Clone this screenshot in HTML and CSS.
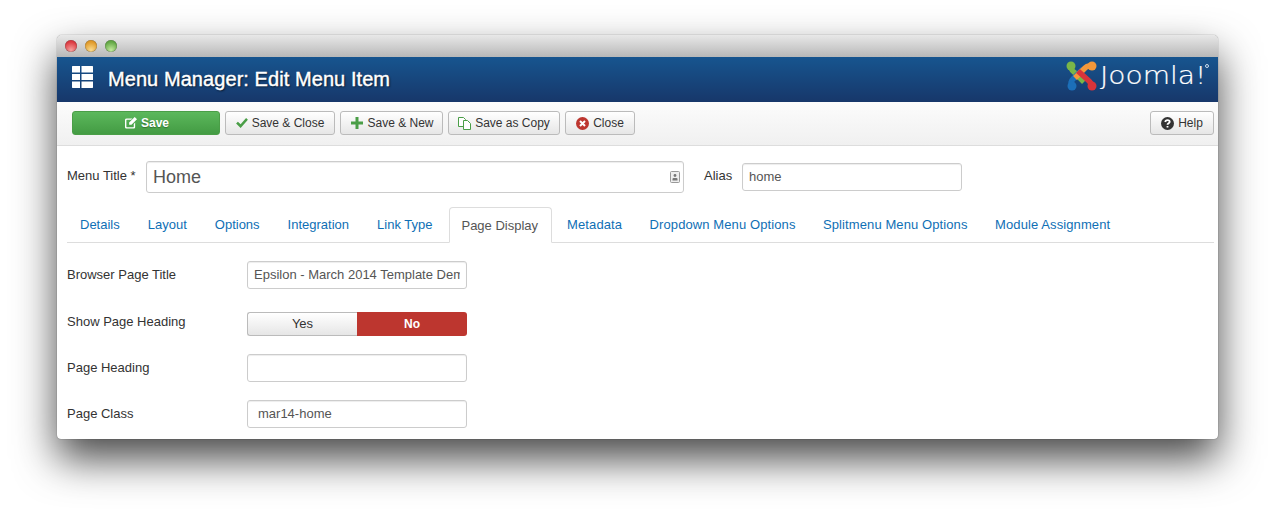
FILE: index.html
```html
<!DOCTYPE html>
<html lang="en">
<head>
    <title>Menu Manager: Edit Menu Item</title>
    <link rel="stylesheet" href="styles.css">
</head>
<body>
<div class="window">
    <div class="titlebar">
        <span class="light light-red"></span>
        <span class="light light-yellow"></span>
        <span class="light light-green"></span>
    </div>
    <header class="header">
        <svg class="header-icon" width="21" height="22" viewBox="0 0 21 22">
            <path fill="#fff" d="M.5 0H8v6.500H0V.5zM9.500 0h11l.5.500v6H9.500zM0 8h8v6H0zM9.500 8H21v6H9.500zM0 15.500h8V22H.5l-.5-.5zM9.500 15.500H21v6l-.5.500h-11z"/>
        </svg>
        <h1 class="header-title">Menu Manager: Edit Menu Item</h1>
        <div class="logo">
            <svg width="31" height="31" viewBox="0 0 31 31" fill="none" stroke-width="5.500">
                <path stroke="#7ab648" d="M5 8q1 3 4 5l9 9"/>
                <circle cx="5" cy="6" r="4.500" fill="#7ab648"/>
                <path stroke="#1c6fb8" d="M17 9 7 19q-3 3-1 6"/>
                <circle cx="6" cy="26" r="4.500" fill="#1c6fb8"/>
                <path stroke="#f4983a" d="M25 7q-3-2-6 1L9 18"/>
                <circle cx="26" cy="6" r="4.500" fill="#f4983a"/>
                <path stroke="#d9343a" d="M12 11l11 10q3 3 2 5"/>
                <circle cx="26" cy="26" r="4.500" fill="#d9343a"/>
            </svg>
            <span class="logo-text">Joomla!</span>
            <span class="logo-reg"></span>
        </div>
    </header>
    <div class="toolbar">
        <button class="btn btn-save">
            <svg width="12" height="12" viewBox="0 0 13 13"><path fill="#fff" d="M2 1.500h6L6.500 3H2q-.5 0-.5.500v7q0 .5.500.5h7q.5 0 .5-.5V7.500L11 6v5q0 1.500-1.500 1.500h-8Q0 12.500 0 11V3q0-1.500 2-1.500zM10.500 0 13 2.500 7 8.500H4.500V6z"/></svg>
            Save
        </button>
        <button class="btn btn-save-close">
            <svg width="12" height="10" viewBox="0 0 13 11"><path fill="#4a9e47" d="M0 6l2-2 3 3 6-7 2 2-8 9z"/></svg>
            Save &amp; Close
        </button>
        <button class="btn btn-save-new">
            <svg width="12" height="12" viewBox="0 0 12 12"><path fill="#4a9e47" d="M4.500 0h3v4.500H12v3H7.500V12h-3V7.500H0v-3h4.500z"/></svg>
            Save &amp; New
        </button>
        <button class="btn btn-copy">
            <svg width="13" height="13" viewBox="0 0 13 13" fill="#fff" stroke="#4a9e47"><path d="M.5.500h5l2 2v7h-7z"/><path d="M5.500 3.500h4l3 3v6h-7z"/></svg>
            Save as Copy
        </button>
        <button class="btn btn-close">
            <svg width="13" height="13" viewBox="0 0 13 13"><circle cx="6.500" cy="6.500" r="6.500" fill="#bd362f"/><path stroke="#fff" stroke-width="2" d="M4 4l5 5M9 4l-5 5"/></svg>
            Close
        </button>
        <button class="btn btn-help">
            <svg width="13" height="13" viewBox="0 0 13 13"><circle cx="6.500" cy="6.500" r="6.500" fill="#333"/><path fill="none" stroke="#fff" stroke-width="1.800" d="M4.200 5q.3-1.900 2.300-1.900 2.200 0 2.200 1.700c0 1.500-2.200 1.400-2.200 3"/><path stroke="#fff" stroke-width="1.800" d="M6.500 9v1.600"/></svg>
            Help
        </button>
    </div>
    <div class="content">
        <div class="title-row">
            <label class="title-label">Menu Title *</label>
            <div class="title-field">
                <input class="input input-title" type="text" value="Home">
                <svg class="card-icon" width="10" height="12" viewBox="0 0 10 12">
                    <rect x=".5" y=".5" width="9" height="11" rx="1" fill="#eee" stroke="#999"/>
                    <circle cx="5" cy="4.500" r="1.400" fill="#777"/>
                    <path fill="#777" d="M2.500 9.500V8q0-1 1-1h3q1 0 1 1v1.500z"/>
                </svg>
            </div>
            <label class="alias-label">Alias</label>
            <input class="input input-alias" type="text" value="home">
        </div>
        <ul class="tabs">
            <li class="tab">Details</li>
            <li class="tab">Layout</li>
            <li class="tab">Options</li>
            <li class="tab">Integration</li>
            <li class="tab">Link Type</li>
            <li class="tab tab-active">Page Display</li>
            <li class="tab tab-long">Metadata</li>
            <li class="tab tab-long">Dropdown Menu Options</li>
            <li class="tab tab-long">Splitmenu Menu Options</li>
            <li class="tab tab-long">Module Assignment</li>
        </ul>
        <div class="form">
            <div class="form-row">
                <label class="form-label">Browser Page Title</label>
                <input class="input input-field" type="text" value="Epsilon - March 2014 Template Demo">
            </div>
            <div class="form-row form-row-toggle">
                <label class="form-label">Show Page Heading</label>
                <div class="toggle">
                    <span class="toggle-yes">Yes</span>
                    <span class="toggle-no">No</span>
                </div>
            </div>
            <div class="form-row">
                <label class="form-label">Page Heading</label>
                <input class="input input-field" type="text">
            </div>
            <div class="form-row">
                <label class="form-label">Page Class</label>
                <input class="input input-field input-class" type="text" value="mar14-home">
            </div>
        </div>
    </div>
</div>
</body>
</html>
```

FILE: styles.css
```css
html, body {
  height: 518px;
  overflow: hidden;
}
body {
  margin: 0;
  background: #fff;
  font-family: "Liberation Sans", Arial, sans-serif;
  font-size: 13px;
  color: #333;
}
.window {
  width: 1161px;
  height: 404px;
  margin: 35px 0 0 57px;
  border-radius: 5px 5px 4px 4px;
  background: #fff;
  overflow: hidden;
  box-shadow: 0 20px 42px rgba(0, 0, 0, .72), 0 0 1px rgba(0, 0, 0, .7);
}
.titlebar {
  display: flex;
  align-items: center;
  gap: 8px;
  height: 22px;
  padding-left: 8px;
  box-sizing: border-box;
  background: linear-gradient(#e8e8e8, #b8b8b8);
}
.light {
  width: 12px;
  height: 12px;
  border-radius: 50%;
  box-shadow: inset 0 0 1px rgba(0, 0, 0, .7);
}
.light-red {
  background: radial-gradient(circle at 50% 85%, #f7a3a0, #dc3b42 70%);
}
.light-yellow {
  background: radial-gradient(circle at 50% 85%, #fbdc8e, #e09a2a 70%);
}
.light-green {
  background: radial-gradient(circle at 50% 85%, #c4eb9e, #63a845 70%);
}
.header {
  display: flex;
  height: 45px;
  padding: 0 10px 0 15px;
  background: linear-gradient(#17558f, #17376a);
}
.header-icon {
  margin: 9px 15px 0 0;
}
.header-title {
  margin: 0;
  font-size: 20px;
  line-height: 45px;
  font-weight: normal;
  letter-spacing: .07px;
  color: #fff;
  -webkit-text-stroke: .4px #fff;
  text-shadow: 1px 1px 2px rgba(0, 0, 0, .7);
}
.logo {
  display: flex;
  align-items: flex-start;
  margin-left: auto;
  padding-top: 3px;
  position: relative;
}
.logo-text {
  width: 108px;
  margin-left: 3px;
  font-family: "DejaVu Sans", sans-serif;
  font-size: 24px;
  line-height: 33px;
  font-weight: 200;
  color: #fff;
  -webkit-text-stroke: .2px #fff;
  transform: scaleX(1.17);
  transform-origin: left;
}
.logo-reg {
  position: absolute;
  right: -1px;
  top: 7px;
  width: 2px;
  height: 2px;
  border: 1px solid #cde;
  border-radius: 50%;
}
.toolbar {
  display: flex;
  align-items: flex-start;
  gap: 5px;
  height: 34px;
  padding: 9px 4px 0 15px;
  border-bottom: 1px solid #ddd;
  background: linear-gradient(#fcfcfc, #f0f0f0);
}
.btn {
  display: flex;
  align-items: center;
  justify-content: center;
  gap: 4px;
  height: 24px;
  padding: 0;
  border: 1px solid #bbb;
  border-radius: 3px;
  background: linear-gradient(#fff, #e6e6e6);
  font: inherit;
  font-size: 12px;
  color: #333;
}
.btn-save {
  width: 148px;
  padding-left: 2px;
  border-color: #4a9e47;
  background: linear-gradient(#5cb85c, #439b43);
  color: #fff;
  font-weight: bold;
  text-shadow: 0 1px 1px rgba(0, 0, 0, .3);
}
.btn-save-close {
  width: 110px;
}
.btn-save-new {
  width: 103px;
  padding-left: 2px;
}
.btn-copy {
  width: 112px;
}
.btn-close {
  width: 70px;
}
.btn-help {
  width: 64px;
  margin-left: auto;
}
.content {
  padding: 15px 4px 0 10px;
}
.title-row {
  display: flex;
  align-items: center;
  height: 32px;
}
.title-label {
  width: 79px;
  margin-top: -4px;
}
.title-field {
  position: relative;
  display: flex;
}
.input {
  box-sizing: border-box;
  height: 28px;
  border: 1px solid #ccc;
  border-radius: 3px;
  background: #fff;
  font: inherit;
  color: #555;
  box-shadow: inset 0 1px 1px rgba(0, 0, 0, .075);
}
.input-title {
  width: 538px;
  height: 32px;
  padding: 0 6px;
  font-size: 18px;
}
.card-icon {
  position: absolute;
  right: 4px;
  top: 10px;
}
.alias-label {
  margin: -3px 10px 0 20px;
  width: 28px;
}
.input-alias {
  width: 220px;
  padding: 0 6px 2px;
}
.tabs {
  display: flex;
  height: 35px;
  margin: 14px 0 0;
  padding: 0;
  list-style: none;
  border-bottom: 1px solid #ddd;
}
.tab {
  box-sizing: border-box;
  height: 36px;
  padding: 10px 13px 0;
  margin-right: 2px;
  color: #0f6fb5;
}
.tab-active {
  margin-left: 2px;
  padding-left: 11px;
  padding-right: 13px;
  border: 1px solid #ddd;
  border-bottom-color: #fff;
  border-radius: 4px 4px 0 0;
  color: #555;
}
.tab-long {
  margin-right: 1.500px;
  letter-spacing: .1px;
}
.form {
  padding-top: 18px;
}
.form-row {
  display: flex;
  align-items: center;
  height: 28px;
  margin-bottom: 18px;
}
.form-row-toggle {
  height: 24px;
  margin: 23px 0 18px;
}
.form-row:first-child {
  margin-bottom: 0;
}
.form-label {
  width: 180px;
  margin-top: -2px;
}
.form-row-toggle .form-label {
  margin-top: -6px;
}
.input-field {
  width: 220px;
  padding: 0 6px 2px;
}
.input-class {
  padding-left: 10px;
}
.toggle {
  display: flex;
  width: 220px;
  height: 24px;
  text-align: center;
  line-height: 24px;
}
.toggle-yes {
  box-sizing: border-box;
  width: 110px;
  border: 1px solid #bbb;
  border-right: none;
  border-radius: 3px 0 0 3px;
  background: linear-gradient(#fff, #e6e6e6);
  line-height: 22px;
}
.toggle-no {
  width: 110px;
  border-radius: 0 3px 3px 0;
  background: #bd362f;
  color: #fff;
  font-size: 12px;
  font-weight: bold;
}
```
